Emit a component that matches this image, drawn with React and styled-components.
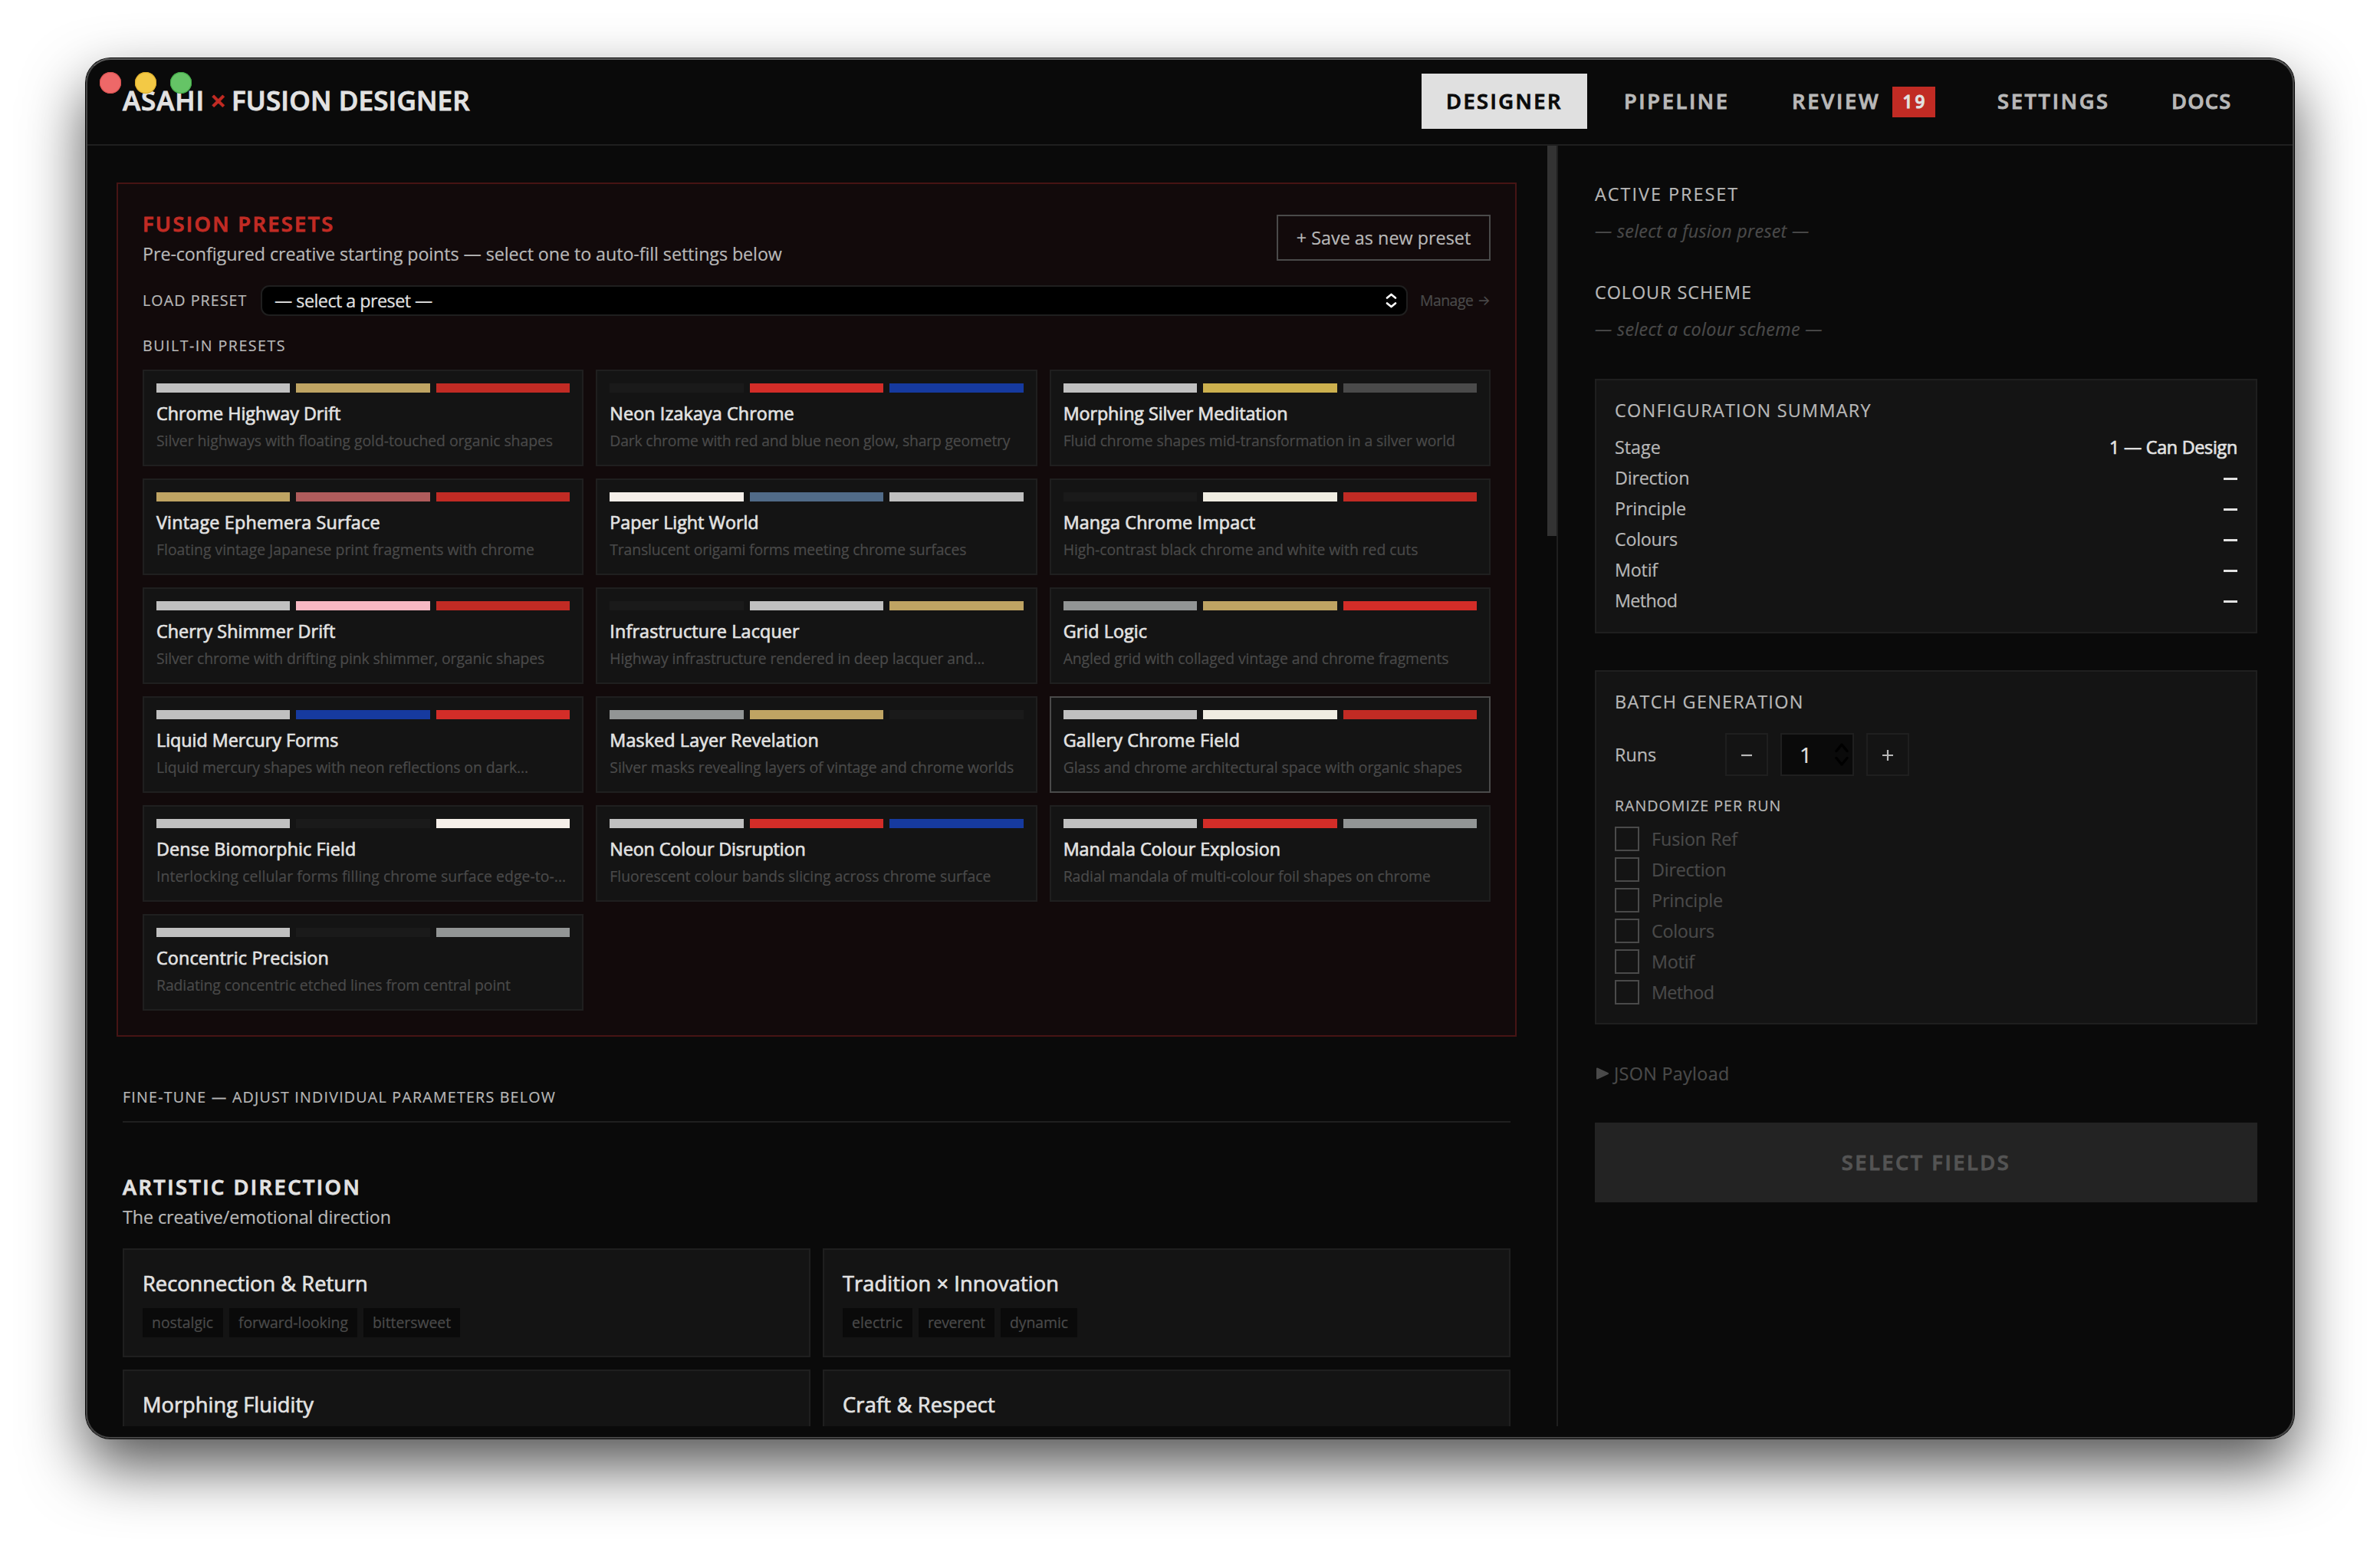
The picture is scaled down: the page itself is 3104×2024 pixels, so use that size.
import React from 'react';
import styled, { createGlobalStyle, css } from 'styled-components';

const c = {
  bg: '#0a0a0a',
  card: '#141414',
  line: '#1f1f1f',
  text: '#e2e2e2',
  soft: '#b8b8b8',
  mute: '#4a4a4a',
  red: '#c12b24',
};

const swatch = {
  silver: '#c0c0c0',
  gold: '#bfa463',
  red: '#c12b24',
  ink: '#1a1a1a',
  neon: '#d32d28',
  blue: '#163a9f',
  yellow: '#ccb04e',
  slate: '#4a4a4a',
  rose: '#b05c5c',
  paper: '#f5efe9',
  denim: '#516b88',
  ivory: '#f0ede2',
  pink: '#f7b8c3',
  steel: '#929595',
};

const GlobalStyle = createGlobalStyle`
  html, body { margin: 0; background: #fff; }
  * { box-sizing: border-box; }
  body {
    font-family: "Open Sans", "Noto Sans", sans-serif;
    color: ${c.text};
    -webkit-text-stroke: 0.2px currentColor;
  }
  button { font: inherit; margin: 0; border-radius: 0; }
`;

const medium = css`-webkit-text-stroke: 0.7px currentColor;`;
const semibold = css`
  font-weight: 600;
  -webkit-text-stroke: 0.9px currentColor;
`;

const T = styled.span`
  white-space: nowrap;
  letter-spacing: ${(p) => p.$ls || 0}px;
`;

const Desktop = styled.div`
  width: 3104px;
  height: 2024px;
  padding: 76px 112px 148px;
  overflow: hidden;
`;

const Window = styled.div`
  position: relative;
  width: 2880px;
  height: 1800px;
  padding-bottom: 16px;
  display: flex;
  flex-direction: column;
  background: ${c.bg};
  border-radius: 32px;
  overflow: hidden;
  &::after {
    content: '';
    position: absolute;
    inset: 0;
    border-radius: 32px;
    border: 2px solid #454545;
    border-top-color: #5c5c5c;
    pointer-events: none;
  }
`;

const WindowShadow = styled.div`
  width: 2880px;
  height: 1800px;
  border-radius: 32px;
  box-shadow: 0 0 0 1px #060606, 0 36px 80px rgba(0, 0, 0, 0.68);
`;

const Lights = styled.div`
  position: absolute;
  left: 18px;
  top: 18px;
  display: flex;
  gap: 18px;
  z-index: 2;
`;

const Light = styled.i`
  width: 28px;
  height: 28px;
  border-radius: 50%;
  background: ${(p) => p.$color};
  box-shadow: inset 0 0 0 1px ${(p) => p.$edge};
`;

const Header = styled.header`
  flex: none;
  height: 114px;
  padding: 0 48px;
  display: flex;
  align-items: center;
  justify-content: space-between;
  border-bottom: 2px solid ${c.line};
`;

const Brand = styled.h1`
  margin: 0 0 3px;
  display: flex;
  font-size: 35px;
  line-height: 48px;
  ${semibold}
`;

const Cross = styled.span`
  width: 35px;
  text-align: center;
  color: ${c.red};
`;

const Nav = styled.nav`
  display: flex;
  gap: 16px;
`;

const NavItem = styled.button`
  width: ${(p) => p.$w}px;
  height: 72px;
  padding: 0 0 1px 32px;
  display: flex;
  align-items: center;
  gap: 16px;
  border: 0;
  background: ${(p) => (p.$active ? '#e0e0e0' : 'transparent')};
  color: ${(p) => (p.$active ? c.bg : c.soft)};
  font-size: 27.2px;
  line-height: 40px;
  ${semibold}
`;

const Badge = styled.span`
  width: 56px;
  height: 40px;
  padding-left: 2px;
  text-align: center;
  margin-top: 3px;
  background: ${c.red};
  color: ${c.text};
  font-size: 22.5px;
  line-height: 40px;
  letter-spacing: 3px;
`;

const Body = styled.div`
  flex: 1;
  min-height: 0;
  display: flex;
`;

const Main = styled.main`
  flex: 1;
  min-width: 0;
  padding: 48px 48px 0;
  overflow: hidden;
`;

const ScrollTrack = styled.div`
  width: 12px;
  flex: none;
`;

const ScrollThumb = styled.div`
  height: 509px;
  background: #333;
`;

const PresetPanel = styled.section`
  margin: 0 -8px;
  padding: 32px;
  border: 2px solid #461414;
  background: #120a0b;
`;

const PanelHead = styled.div`
  height: 76px;
  display: flex;
  align-items: center;
  justify-content: space-between;
`;

const HeadText = styled.div`
  display: flex;
  flex-direction: column;
  margin-top: 2px;
`;

const Heading = styled.h2`
  margin: 0;
  font-size: 27.2px;
  line-height: 40px;
  ${semibold}
  color: ${(p) => (p.$red ? c.red : c.text)};
`;

const Sub = styled.p`
  margin: 0;
  font-size: 23.3px;
  line-height: 38px;
  color: ${c.soft};
`;

const SaveButton = styled.button`
  width: 279px;
  height: 60px;
  border: 2px solid ${c.mute};
  background: transparent;
  color: ${c.soft};
  font-size: 23.3px;
  line-height: 34px;
`;

const LoadRow = styled.div`
  height: 40px;
  margin-top: 24px;
  display: grid;
  grid-template-columns: 138px 1fr 92px;
  gap: 16px;
  align-items: center;
`;

const Caption = styled.div`
  font-size: 19.6px;
  line-height: 30px;
  color: ${c.soft};
`;

const Select = styled.div`
  height: 40px;
  padding: 0 12px 0 16px;
  display: flex;
  align-items: center;
  justify-content: space-between;
  border: 2px solid ${c.line};
  border-radius: 11px;
  background: #000;
  font-size: 23.3px;
  line-height: 34px;
`;

const Manage = styled.a`
  display: flex;
  justify-content: space-between;
  font-size: 19.4px;
  line-height: 30px;
  color: ${c.mute};
`;

const Arrow = styled.span`
  font-family: "Inter", "DejaVu Sans", sans-serif;
  font-size: 18px;
`;

const BuiltIn = styled(Caption)`
  margin: 24px 0 16px;
`;

const PresetGrid = styled.div`
  display: grid;
  grid-template-columns: repeat(3, 1fr);
  gap: 16px;
`;

const PresetCard = styled.article`
  height: 126px;
  padding: 16px;
  border: 2px solid ${(p) => (p.$hover ? c.mute : c.line)};
  background: ${c.card};
  min-width: 0;
`;

const Swatches = styled.div`
  display: grid;
  grid-template-columns: repeat(3, 1fr);
  gap: 8px;
  height: 12px;
`;

const Swatch = styled.i`
  background: ${(p) => p.$color};
`;

const PresetName = styled.div`
  margin-top: 9px;
  font-size: 23.3px;
  line-height: 36px;
  ${medium}
`;

const PresetDesc = styled.div`
  margin-top: 3px;
  font-size: 19.4px;
  line-height: 30px;
  color: ${c.mute};
`;

const FineTune = styled.div`
  margin-top: 62px;
  padding: 2px 0 16px;
  height: 50px;
  border-bottom: 2px solid ${c.line};
`;

const Direction = styled.section`
  margin-top: 64px;
`;

const DirectionGrid = styled.div`
  margin-top: 22px;
  display: grid;
  grid-template-columns: repeat(2, 1fr);
  gap: 16px;
`;

const DirectionCard = styled.article`
  height: 142px;
  padding: 24px;
  border: 2px solid ${c.line};
  background: ${c.card};
`;

const DirectionName = styled.div`
  font-size: 27.2px;
  line-height: 40px;
  ${medium}
`;

const Tags = styled.div`
  margin-top: 12px;
  display: flex;
  gap: 8px;
`;

const Tag = styled.span`
  width: ${(p) => p.$w}px;
  height: 38px;
  padding-left: 12px;
  background: ${c.bg};
  color: ${c.mute};
  font-size: 19.4px;
  line-height: 37px;
`;

const Sidebar = styled.aside`
  width: 962px;
  flex: none;
  padding: 48px 48px 0;
  border-left: 2px solid ${c.line};
`;

const Field = styled.div`
  height: 128px;
`;

const Label = styled.div`
  font-size: 23.4px;
  line-height: 30px;
  color: ${c.soft};
`;

const Placeholder = styled.div`
  margin-top: 18px;
  font-size: 23.3px;
  line-height: 30px;
  font-style: italic;
  color: ${c.mute};
`;

const SideCard = styled.section`
  height: ${(p) => p.$h}px;
  padding: 24px;
  border: 2px solid ${c.line};
  background: ${c.card};
  margin-bottom: 48px;
`;

const SummaryList = styled.div`
  margin-top: 13px;
`;

const SummaryRow = styled.div`
  height: 40px;
  display: flex;
  justify-content: space-between;
  font-size: 23.3px;
  line-height: 40px;
  color: ${c.soft};
`;

const Value = styled.span`
  color: ${c.text};
  ${medium}
`;

const Dash = styled.i`
  width: 18px;
  height: 3px;
  margin-top: 20px;
  background: ${c.text};
`;

const RunsRow = styled.div`
  margin-top: 26px;
  height: 56px;
  display: flex;
  align-items: center;
  gap: 16px;
`;

const RunsLabel = styled.span`
  width: 128px;
  font-size: 23.3px;
  line-height: 34px;
  color: ${c.soft};
`;

const Step = styled.button`
  width: 56px;
  height: 56px;
  padding: 0;
  display: grid;
  place-items: center;
  border: 2px solid ${c.line};
  background: transparent;
`;

const NumberBox = styled.div`
  width: 96px;
  height: 56px;
  padding: 0 5px 0 23px;
  display: flex;
  align-items: center;
  justify-content: space-between;
  border: 2px solid ${c.line};
  background: ${c.bg};
  font-size: 28px;
  line-height: 40px;
`;

const RandomCaption = styled(Caption)`
  margin: 24px 0 12px;
`;

const CheckRow = styled.label`
  height: 32px;
  margin-bottom: 8px;
  display: flex;
  align-items: center;
  gap: 16px;
  font-size: 23.3px;
  line-height: 32px;
  color: ${c.mute};
`;

const Box = styled.span`
  width: 32px;
  height: 32px;
  border: 2px solid ${c.mute};
`;

const Payload = styled.div`
  height: 80px;
  display: flex;
  align-items: flex-start;
  gap: 7px;
  padding: 0 0 0 2px;
  font-size: 23.3px;
  line-height: 32px;
  color: ${c.mute};
  svg { margin-top: 8px; }
`;

const Submit = styled.button`
  width: 100%;
  height: 104px;
  padding: 0;
  border: 0;
  background: #232323;
  color: #545454;
  font-size: 27.2px;
  line-height: 40px;
  ${semibold}
`;

const presets = [
  ['Chrome Highway Drift', 0, 'Silver highways with floating gold-touched organic shapes', -0.06, 'silver gold red'],
  ['Neon Izakaya Chrome', 0.11, 'Dark chrome with red and blue neon glow, sharp geometry', -0.2, 'ink neon blue'],
  ['Morphing Silver Meditation', -0.07, 'Fluid chrome shapes mid-transformation in a silver world', -0.1, 'silver yellow slate'],
  ['Vintage Ephemera Surface', 0.22, 'Floating vintage Japanese print fragments with chrome', -0.01, 'gold rose red'],
  ['Paper Light World', -0.01, 'Translucent origami forms meeting chrome surfaces', -0.16, 'paper denim silver'],
  ['Manga Chrome Impact', 0.14, 'High-contrast black chrome and white with red cuts', -0.05, 'ink ivory red'],
  ['Cherry Shimmer Drift', 0.07, 'Silver chrome with drifting pink shimmer, organic shapes', -0.13, 'silver pink red'],
  ['Infrastructure Lacquer', 0.15, 'Highway infrastructure rendered in deep lacquer and...', -0.13, 'ink silver gold'],
  ['Grid Logic', 0.07, 'Angled grid with collaged vintage and chrome fragments', -0.11, 'steel gold neon'],
  ['Liquid Mercury Forms', 0, 'Liquid mercury shapes with neon reflections on dark...', -0.09, 'silver blue neon'],
  ['Masked Layer Revelation', 0.13, 'Silver masks revealing layers of vintage and chrome worlds', -0.07, 'steel gold ink'],
  ['Gallery Chrome Field', 0.21, 'Glass and chrome architectural space with organic shapes', -0.06, 'silver ivory red'],
  ['Dense Biomorphic Field', 0.14, 'Interlocking cellular forms filling chrome surface edge-to-...', 0.06, 'silver ink paper'],
  ['Neon Colour Disruption', -0.12, 'Fluorescent colour bands slicing across chrome surface', -0.03, 'silver neon blue'],
  ['Mandala Colour Explosion', 0, 'Radial mandala of multi-colour foil shapes on chrome', -0.07, 'silver neon steel'],
  ['Concentric Precision', 0.18, 'Radiating concentric etched lines from central point', -0.08, 'silver ink steel'],
];

const directions = [
  ['Reconnection & Return', 0.05, [['nostalgic', 105, 0], ['forward-looking', 167, -0.05], ['bittersweet', 126, -0.03]]],
  ['Tradition × Innovation', 0.11, [['electric', 91, 0.15], ['reverent', 99, -0.3], ['dynamic', 100, -0.06]]],
  ['Morphing Fluidity', 0.06, []],
  ['Craft & Respect', 0.22, []],
];

const summary = [['Stage', 0], ['Direction', -0.2], ['Principle', -0.1], ['Colours', -0.25], ['Motif', -0.2], ['Method', -0.6]];
const checks = [['Fusion Ref', -0.09], ['Direction', -0.2], ['Principle', -0.1], ['Colours', -0.25], ['Motif', -0.2], ['Method', -0.6]];

function Chevrons({ w, h, gap, color, stroke }) {
  const mid = h / 2;
  const d = mid - gap / 2;
  return (
    <svg width={w} height={h} viewBox={`0 0 ${w} ${h}`} fill="none" stroke={color} strokeWidth={stroke} strokeLinecap="round" strokeLinejoin="round">
      <path d={`M2 ${d} L${w / 2} 2 L${w - 2} ${d}`} />
      <path d={`M2 ${h - d} L${w / 2} ${h - 2} L${w - 2} ${h - d}`} />
    </svg>
  );
}

export default function App() {
  return (
    <Desktop>
      <GlobalStyle />
      <WindowShadow>
        <Window>
          <Lights>
            <Light $color="#ee6868" $edge="#d9504f" />
            <Light $color="#f3c945" $edge="#dba927" />
            <Light $color="#65c466" $edge="#3fa944" />
          </Lights>
          <Header>
            <Brand>
              <T $ls={0.9}>ASAHI</T>
              <Cross>×</Cross>
              <T $ls={0.15}>FUSION DESIGNER</T>
            </Brand>
            <Nav>
              <NavItem $active $w={216}><T $ls={2.5}>DESIGNER</T></NavItem>
              <NavItem $w={203}><T $ls={2.65}>PIPELINE</T></NavItem>
              <NavItem $w={252}><T $ls={2.8}>REVIEW</T><Badge>19</Badge></NavItem>
              <NavItem $w={211}><T $ls={2.7}>SETTINGS</T></NavItem>
              <NavItem $w={144}><T $ls={1.2}>DOCS</T></NavItem>
            </Nav>
          </Header>
          <Body>
            <Main>
              <PresetPanel>
                <PanelHead>
                  <HeadText>
                    <Heading $red><T $ls={2.38}>FUSION PRESETS</T></Heading>
                    <Sub><T $ls={-0.08}>Pre-configured creative starting points — select one to auto-fill settings below</T></Sub>
                  </HeadText>
                  <SaveButton><T $ls={0.04}>+ Save as new preset</T></SaveButton>
                </PanelHead>
                <LoadRow>
                  <Caption><T $ls={1.1}>LOAD PRESET</T></Caption>
                  <Select>
                    <T $ls={-0.52}>— select a preset —</T>
                    <Chevrons w={15} h={20} gap={7} color="#fff" stroke={2.7} />
                  </Select>
                  <Manage><T $ls={-0.5}>Manage</T><Arrow>→</Arrow></Manage>
                </LoadRow>
                <BuiltIn><T $ls={1.5}>BUILT-IN PRESETS</T></BuiltIn>
                <PresetGrid>
                  {presets.map(([name, nls, desc, dls, colors]) => (
                    <PresetCard key={name} $hover={name === 'Gallery Chrome Field'}>
                      <Swatches>
                        {colors.split(' ').map((k) => <Swatch key={k} $color={swatch[k]} />)}
                      </Swatches>
                      <PresetName><T $ls={nls}>{name}</T></PresetName>
                      <PresetDesc><T $ls={dls}>{desc}</T></PresetDesc>
                    </PresetCard>
                  ))}
                </PresetGrid>
              </PresetPanel>
              <FineTune>
                <Caption><T $ls={1.24}>FINE-TUNE — ADJUST INDIVIDUAL PARAMETERS BELOW</T></Caption>
              </FineTune>
              <Direction>
                <Heading><T $ls={2.5}>ARTISTIC DIRECTION</T></Heading>
                <Sub><T $ls={-0.09}>The creative/emotional direction</T></Sub>
                <DirectionGrid>
                  {directions.map(([name, ls, tags]) => (
                    <DirectionCard key={name}>
                      <DirectionName><T $ls={ls}>{name}</T></DirectionName>
                      <Tags>
                        {tags.map(([t, w, tls]) => <Tag key={t} $w={w}><T $ls={tls}>{t}</T></Tag>)}
                      </Tags>
                    </DirectionCard>
                  ))}
                </DirectionGrid>
              </Direction>
            </Main>
            <ScrollTrack><ScrollThumb /></ScrollTrack>
            <Sidebar>
              <Field>
                <Label><T $ls={2}>ACTIVE PRESET</T></Label>
                <Placeholder><T $ls={0.28}>— select a fusion preset —</T></Placeholder>
              </Field>
              <Field>
                <Label><T $ls={0.94}>COLOUR SCHEME</T></Label>
                <Placeholder><T $ls={0.33}>— select a colour scheme —</T></Placeholder>
              </Field>
              <SideCard $h={332}>
                <Label><T $ls={1.28}>CONFIGURATION SUMMARY</T></Label>
                <SummaryList>
                  {summary.map(([k, ls], i) => (
                    <SummaryRow key={k}>
                      <T $ls={ls}>{k}</T>
                      {i === 0 ? <Value><T $ls={-0.26}>1 — Can Design</T></Value> : <Dash />}
                    </SummaryRow>
                  ))}
                </SummaryList>
              </SideCard>
              <SideCard $h={462}>
                <Label><T $ls={1.29}>BATCH GENERATION</T></Label>
                <RunsRow>
                  <RunsLabel>Runs</RunsLabel>
                  <Step><svg width="14" height="14" viewBox="0 0 14 14" stroke={c.soft} strokeWidth="2.2"><path d="M0 8H14" /></svg></Step>
                  <NumberBox>
                    <span>1</span>
                    <Chevrons w={18} h={30} gap={9} color="#000" stroke={3.4} />
                  </NumberBox>
                  <Step><svg width="14" height="16" viewBox="0 0 14 16" stroke={c.soft} strokeWidth="2.2"><path d="M0 9H14M7 2V16" /></svg></Step>
                </RunsRow>
                <RandomCaption><T $ls={1.02}>RANDOMIZE PER RUN</T></RandomCaption>
                {checks.map(([k, ls]) => (
                  <CheckRow key={k}><Box /><T $ls={ls}>{k}</T></CheckRow>
                ))}
              </SideCard>
              <Payload>
                <svg width="16" height="16" viewBox="0 0 16 16" fill={c.mute} stroke={c.mute} strokeWidth="2" strokeLinejoin="round"><path d="M1 1.5L15 8L1 14.5Z" /></svg>
                <T $ls={0.34}>JSON Payload</T>
              </Payload>
              <Submit><T $ls={2.57}>SELECT FIELDS</T></Submit>
            </Sidebar>
          </Body>
        </Window>
      </WindowShadow>
    </Desktop>
  );
}
